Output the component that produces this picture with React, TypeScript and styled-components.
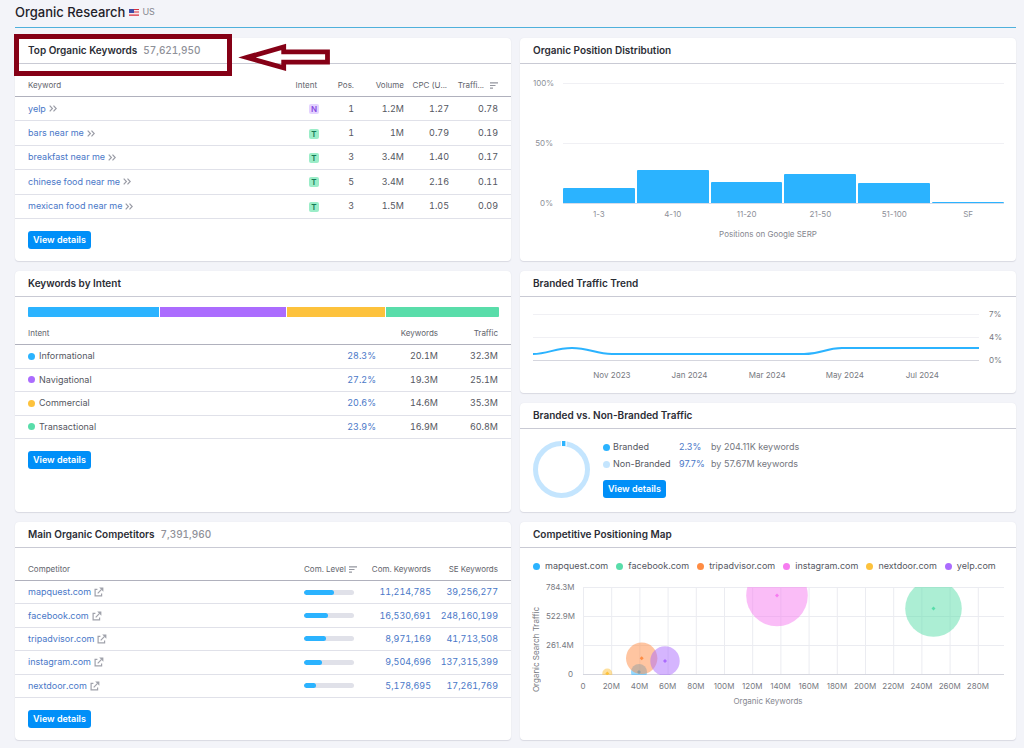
import React from 'react';
import styled, { createGlobalStyle } from 'styled-components';

const GlobalStyle = createGlobalStyle`
  *, *::before, *::after { box-sizing: border-box; }
  body {
    margin: 0;
    background: #f3f4f9;
    color: #55575f;
    font-family: Inter, "Liberation Sans", sans-serif;
    font-size: 9px;
    line-height: 12px;
  }
`;

const Page = styled.main`
  padding: 0 8px 8px 15px;
`;

const PageHeader = styled.header`
  display: flex;
  align-items: center;
  gap: 4px;
  height: 28px;
  padding-bottom: 3px;
  margin-bottom: 10px;
  border-bottom: 1px solid #4fb0dc;
`;

const PageTitle = styled.h1`
  margin: 0;
  font-size: 13px;
  line-height: 16px;
  font-weight: 500;
  color: #1f2128;
`;

const Country = styled.span`
  display: flex;
  align-items: center;
  gap: 3px;
  color: #85878f;
`;

const Dashboard = styled.div`
  display: grid;
  grid-template-columns: 1fr 1fr;
  gap: 10px 9px;
`;

const Stack = styled.div`
  display: flex;
  flex-direction: column;
  gap: 10px;
`;

const CardBox = styled.section`
  position: relative;
  min-width: 0;
  background: #fff;
  border-radius: 4px;
  box-shadow: 0 1px 1px #d9dae2, 0 0 1px #dfe0e8;
`;

const CardHeader = styled.header`
  display: flex;
  align-items: center;
  gap: 6px;
  height: 26px;
  padding: 0 13px 1px;
  border-bottom: 1px solid #c9cad4;
`;

const CardTitle = styled.h2`
  margin: 0;
  font-size: 10px;
  line-height: 14px;
  font-weight: 600;
  color: #2b2d35;
`;

const Count = styled.span`
  font-size: 10px;
  line-height: 14px;
  font-weight: 500;
  font-variant-numeric: tabular-nums;
  color: #8f9199;
`;

const Table = styled.table<{ $height: number }>`
  width: 100%;
  height: ${(p) => p.$height}px;
  table-layout: fixed;
  border-collapse: separate;
  border-spacing: 0;
  font-variant-numeric: tabular-nums;
`;

const Th = styled.th<{ $width?: number; $align?: string; $inset?: number; $height: number; $top?: number }>`
  width: ${(p) => (p.$width ? `${p.$width}px` : 'auto')};
  height: ${(p) => p.$height}px;
  padding: ${(p) => p.$top ?? 0}px ${(p) => p.$inset ?? 0}px 0 0;
  border-bottom: 1px solid #b0b1bd;
  font-size: 8px;
  font-weight: 400;
  text-align: ${(p) => p.$align ?? 'right'};
  white-space: nowrap;
  color: #62646c;
  &:first-child { padding-left: 13px; }
  &:last-child { padding-right: 13px; }
`;

const Td = styled.td<{ $align?: string }>`
  height: 23px;
  padding: 0;
  border-bottom: 1px solid #e0e1e9;
  text-align: ${(p) => p.$align ?? 'right'};
  white-space: nowrap;
  &:first-child { padding-left: 13px; }
  &:last-child { padding-right: 13px; }
`;

const HeadLabel = styled.span<{ $gap: number }>`
  display: inline-flex;
  align-items: center;
  gap: ${(p) => p.$gap}px;
`;

const Link = styled.a`
  display: inline-flex;
  align-items: center;
  gap: 3px;
  color: #4a78c8;
  text-decoration: none;
`;

const Badge = styled.span<{ $kind: string }>`
  display: inline-block;
  width: 10px;
  height: 10px;
  border-radius: 2px;
  font-size: 8px;
  line-height: 10px;
  font-weight: 600;
  text-align: center;
  vertical-align: middle;
  background: ${(p) => (p.$kind === 'N' ? '#e4d3ff' : '#9bedc8')};
  color: ${(p) => (p.$kind === 'N' ? '#8649e1' : '#157a56')};
`;

const CardFooter = styled.footer`
  padding: 12px 13px;
`;

const Button = styled.button`
  display: block;
  height: 18px;
  padding: 0 5px;
  border: 0;
  border-radius: 3px;
  background: #008ff8;
  color: #fff;
  font: 600 9px/18px Inter, "Liberation Sans", sans-serif;
  white-space: nowrap;
  cursor: pointer;
`;

const IntentBar = styled.div`
  display: flex;
  gap: 1px;
  height: 10px;
  margin: 10px 12px 0 13px;
  border-radius: 1px;
  overflow: hidden;
`;

const Segment = styled.div<{ $color: string; $share: number }>`
  flex: ${(p) => p.$share} 1 0;
  background: ${(p) => p.$color};
`;

const Dot = styled.span<{ $color: string }>`
  flex: none;
  width: 7px;
  height: 7px;
  border-radius: 50%;
  background: ${(p) => p.$color};
`;

const DotLabel = styled.span<{ $gap: number }>`
  display: inline-flex;
  align-items: center;
  gap: ${(p) => p.$gap}px;
  white-space: nowrap;
`;

const Level = styled.div`
  width: 50px;
  height: 5px;
  border-radius: 3px;
  background: #e0e1e9;
  overflow: hidden;
`;

const LevelFill = styled.div`
  height: 100%;
  border-radius: 3px;
  background: #2bb3ff;
`;

/* Position distribution */

const BarChart = styled.div`
  display: grid;
  grid-template-columns: 20px 1fr;
  column-gap: 10px;
  padding: 13px 12px 0 13px;
  font-size: 8px;
  color: #8d8f98;
`;

const ValueAxis = styled.div`
  display: flex;
  flex-direction: column;
  justify-content: space-between;
  height: 132px;
  text-align: right;
`;

const Bars = styled.div`
  display: flex;
  align-items: flex-end;
  gap: 2px;
  height: 121px;
  margin-top: 6px;
  border-top: 1px solid #f0f0f4;
  border-bottom: 1px solid #d5dcea;
  background: linear-gradient(#f0f0f4, #f0f0f4) 0 59px / 100% 1px no-repeat;
`;

const Bar = styled.div`
  flex: 1;
  border-radius: 1px 1px 0 0;
  background: #2bb3ff;
`;

const BarLabels = styled.div`
  grid-column: 2;
  display: flex;
  gap: 2px;
  margin-top: -1px;
  & > span { flex: 1; text-align: center; }
`;

const AxisTitle = styled.div<{ $top: number }>`
  margin-top: ${(p) => p.$top}px;
  font-size: 8px;
  text-align: center;
  color: #85878f;
`;

/* Traffic trend */

const Trend = styled.div`
  display: grid;
  grid-template-columns: 1fr 15px;
  column-gap: 10px;
  align-content: start;
  height: 96px;
  padding: 11px 12px 0 13px;
  font-size: 8px;
  color: #777981;
`;

const TrendPlot = styled.svg`
  display: block;
  width: 100%;
  height: 48px;
  margin-top: 5px;
`;

const TrendAxis = styled.div`
  display: flex;
  flex-direction: column;
  justify-content: space-between;
  height: 58px;
`;

const TrendLabels = styled.div`
  display: flex;
  padding: 3px 4% 0 9%;
  & > span { flex: 1; text-align: center; white-space: nowrap; }
`;

/* Branded share */

const Share = styled.div`
  display: flex;
  gap: 13px;
  height: 83px;
  padding: 12px 13px 0;
`;

const ShareDetails = styled.div`
  display: flex;
  flex-direction: column;
  align-items: flex-start;
`;

const ShareRow = styled.div`
  display: grid;
  grid-template-columns: 76px 32px auto;
  align-items: start;
  height: 17px;
  white-space: nowrap;
  color: #74767e;
`;

const ShareName = styled(DotLabel)`
  color: #55575f;
`;

const ShareButton = styled(Button)`
  margin-top: 5px;
`;

/* Positioning map */

const Legend = styled.div`
  display: flex;
  gap: 8px;
  padding: 12px 12px 0 13px;
`;

const MapChart = styled.div`
  display: grid;
  grid-template-columns: 6px 27px 1fr;
  column-gap: 7px;
  padding: 9px 12px 0 13px;
  font-size: 8px;
  color: #777981;
`;

const VerticalTitle = styled.div`
  writing-mode: vertical-rl;
  transform: rotate(180deg);
  justify-self: center;
  align-self: end;
  line-height: 8px;
  white-space: nowrap;
`;

const MapAxis = styled.div`
  display: flex;
  flex-direction: column;
  justify-content: space-between;
  height: 99px;
  text-align: right;
`;

const MapArea = styled.div`
  padding: 6px 0 0 3px;
`;

const MapPlot = styled.svg`
  display: block;
  width: 100%;
  height: auto;
  margin-bottom: 5px;
`;

const MapLabels = styled.div`
  display: grid;
  grid-template-columns: repeat(15, 1fr);
  margin: 0 12px 0 -14px;
  text-align: center;
  white-space: nowrap;
`;

/* Callout drawn over the first card */

const CalloutFrame = styled.div`
  position: absolute;
  top: -4px;
  left: -1px;
  width: 218px;
  height: 42px;
  border: 5px solid #850016;
  pointer-events: none;
`;

const CalloutArrow = styled.svg`
  position: absolute;
  top: 4px;
  left: 221px;
  pointer-events: none;
`;

const FlagIcon = () => (
  <svg width="10" height="7" viewBox="0 0 10 7" aria-hidden="true">
    <rect width="10" height="7" rx="1" fill="#f6e9ec" />
    <path d="M0 .5h10M0 3h10M0 6.2h10" stroke="#d8313f" strokeWidth="1.2" />
    <rect width="5" height="4" rx="0.5" fill="#3b4ba6" />
  </svg>
);

const SortIcon = () => (
  <svg width="8" height="7" viewBox="0 0 8 7" aria-hidden="true">
    <path d="M0 .8h8M0 3.5h5.5M0 6.2h3" stroke="#94969f" strokeWidth="1.2" />
  </svg>
);

const ChevronsIcon = () => (
  <svg width="8" height="7" viewBox="0 0 8 7" fill="none" stroke="#9a9ca6" strokeWidth="1.2" aria-hidden="true">
    <path d="M.7.7 3.4 3.5.7 6.3M4.5.7l2.7 2.8-2.7 2.8" />
  </svg>
);

const ExternalIcon = () => (
  <svg width="10" height="10" viewBox="0 0 10 10" fill="none" stroke="#a0a2ab" strokeWidth="1.2" aria-hidden="true">
    <path d="M3.4 2.4H1.1v6.5h6.5V6.4M3.7 6.3 7.6 2.4" />
    <path d="M5.2.6h4.2v4.2z" fill="#a0a2ab" stroke="none" />
  </svg>
);

const keywords = [
  ['yelp', 'N', '1', '1.2M', '1.27', '0.78'],
  ['bars near me', 'T', '1', '1M', '0.79', '0.19'],
  ['breakfast near me', 'T', '3', '3.4M', '1.40', '0.17'],
  ['chinese food near me', 'T', '5', '3.4M', '2.16', '0.11'],
  ['mexican food near me', 'T', '3', '1.5M', '1.05', '0.09'],
];

const intents = [
  { name: 'Informational', color: '#2bb3ff', share: 131, pct: '28.3%', kw: '20.1M', traffic: '32.3M' },
  { name: 'Navigational', color: '#ab6cfe', share: 127, pct: '27.2%', kw: '19.3M', traffic: '25.1M' },
  { name: 'Commercial', color: '#fdc23c', share: 98, pct: '20.6%', kw: '14.6M', traffic: '35.3M' },
  { name: 'Transactional', color: '#59ddaa', share: 113, pct: '23.9%', kw: '16.9M', traffic: '60.8M' },
];

const competitors = [
  { name: 'mapquest.com', level: 60, kw: '11,214,785', se: '39,256,277' },
  { name: 'facebook.com', level: 48, kw: '16,530,691', se: '248,160,199' },
  { name: 'tripadvisor.com', level: 44, kw: '8,971,169', se: '41,713,508' },
  { name: 'instagram.com', level: 36, kw: '9,504,696', se: '137,315,399' },
  { name: 'nextdoor.com', level: 24, kw: '5,178,695', se: '17,261,769' },
];

const positions = [
  { range: '1-3', value: 12.5 },
  { range: '4-10', value: 27.5 },
  { range: '11-20', value: 17.5 },
  { range: '21-50', value: 24 },
  { range: '51-100', value: 17 },
  { range: 'SF', value: 1 },
];

const bubbles = [
  { name: 'mapquest.com', color: '#2bb3ff', x: 56, y: 85, r: 8 },
  { name: 'facebook.com', color: '#59ddaa', x: 350.5, y: 21.5, r: 28.3 },
  { name: 'tripadvisor.com', color: '#ff8c43', x: 58.7, y: 71.3, r: 15.7 },
  { name: 'instagram.com', color: '#f67cf0', x: 194, y: 8.5, r: 30.8 },
  { name: 'nextdoor.com', color: '#fdc23c', x: 24.3, y: 86.5, r: 5 },
  { name: 'yelp.com', color: '#ab6cfe', x: 82, y: 74, r: 14.7 },
];

const mapTicks = Array.from({ length: 15 }, (_, i) => (i === 0 ? '0' : `${i * 20}M`));

function TopKeywords() {
  return (
    <CardBox>
      <CardHeader>
        <CardTitle>Top Organic Keywords</CardTitle>
        <Count>57,621,950</Count>
      </CardHeader>
      <Table $height={155}>
        <thead>
          <tr>
            <Th $height={33} $top={10} $align="left">Keyword</Th>
            <Th $height={33} $top={10} $width={40} $inset={2}>Intent</Th>
            <Th $height={33} $top={10} $width={35}>Pos.</Th>
            <Th $height={33} $top={10} $width={50}>Volume</Th>
            <Th $height={33} $top={10} $width={45} $inset={2}>CPC (U...</Th>
            <Th $height={33} $top={10} $width={62}>
              <HeadLabel $gap={6}>Traffi...<SortIcon /></HeadLabel>
            </Th>
          </tr>
        </thead>
        <tbody>
          {keywords.map(([name, kind, pos, volume, cpc, traffic]) => (
            <tr key={name}>
              <Td $align="left"><Link href="#">{name}<ChevronsIcon /></Link></Td>
              <Td><Badge $kind={kind}>{kind}</Badge></Td>
              <Td>{pos}</Td>
              <Td>{volume}</Td>
              <Td>{cpc}</Td>
              <Td>{traffic}</Td>
            </tr>
          ))}
        </tbody>
      </Table>
      <CardFooter><Button type="button">View details</Button></CardFooter>
      <CalloutFrame />
      <CalloutArrow width="98" height="32" viewBox="236 42 98 32" aria-hidden="true">
        <path
          d="M247 57.4 283.7 47v4.8h43.8v10.4h-43.8v5.6z"
          fill="none" stroke="#850016" strokeWidth="4.8"
        />
      </CalloutArrow>
    </CardBox>
  );
}

function IntentCard() {
  return (
    <CardBox>
      <CardHeader><CardTitle>Keywords by Intent</CardTitle></CardHeader>
      <IntentBar>
        {intents.map((i) => <Segment key={i.name} $color={i.color} $share={i.share} />)}
      </IntentBar>
      <Table $height={122}>
        <thead>
          <tr>
            <Th $height={28} $top={5} $align="left">Intent</Th>
            <Th $height={28} $width={50} />
            <Th $height={28} $top={5} $width={62}>Keywords</Th>
            <Th $height={28} $top={5} $width={73}>Traffic</Th>
          </tr>
        </thead>
        <tbody>
          {intents.map((i) => (
            <tr key={i.name}>
              <Td $align="left"><DotLabel $gap={4}><Dot $color={i.color} />{i.name}</DotLabel></Td>
              <Td><Link href="#">{i.pct}</Link></Td>
              <Td>{i.kw}</Td>
              <Td>{i.traffic}</Td>
            </tr>
          ))}
        </tbody>
      </Table>
      <CardFooter><Button type="button">View details</Button></CardFooter>
    </CardBox>
  );
}

function CompetitorsCard() {
  return (
    <CardBox>
      <CardHeader>
        <CardTitle>Main Organic Competitors</CardTitle>
        <Count>7,391,960</Count>
      </CardHeader>
      <Table $height={150}>
        <thead>
          <tr>
            <Th $height={33} $top={10} $align="left">Competitor</Th>
            <Th $height={33} $top={10} $width={60} $align="left">
              <HeadLabel $gap={3}>Com. Level<SortIcon /></HeadLabel>
            </Th>
            <Th $height={33} $top={10} $width={67}>Com. Keywords</Th>
            <Th $height={33} $top={10} $width={80}>SE Keywords</Th>
          </tr>
        </thead>
        <tbody>
          {competitors.map((c) => (
            <tr key={c.name}>
              <Td $align="left"><Link href="#">{c.name}<ExternalIcon /></Link></Td>
              <Td $align="left"><Level><LevelFill style={{ width: `${c.level}%` }} /></Level></Td>
              <Td><Link href="#">{c.kw}</Link></Td>
              <Td><Link href="#">{c.se}</Link></Td>
            </tr>
          ))}
        </tbody>
      </Table>
      <CardFooter><Button type="button">View details</Button></CardFooter>
    </CardBox>
  );
}

function PositionCard() {
  return (
    <CardBox>
      <CardHeader><CardTitle>Organic Position Distribution</CardTitle></CardHeader>
      <BarChart>
        <ValueAxis><span>100%</span><span>50%</span><span>0%</span></ValueAxis>
        <Bars>
          {positions.map((p) => <Bar key={p.range} style={{ height: `${p.value}%` }} />)}
        </Bars>
        <BarLabels>{positions.map((p) => <span key={p.range}>{p.range}</span>)}</BarLabels>
      </BarChart>
      <AxisTitle $top={8}>Positions on Google SERP</AxisTitle>
    </CardBox>
  );
}

function TrendCard() {
  return (
    <CardBox>
      <CardHeader><CardTitle>Branded Traffic Trend</CardTitle></CardHeader>
      <Trend>
        <TrendPlot viewBox="0 0 446 48" preserveAspectRatio="none" aria-hidden="true">
          <path d="M0 1.5h446M0 24.5h446" stroke="#f0f0f4" />
          <path d="M0 47.5h446" stroke="#d5d6de" />
          <path
            d="M0 41c15 0 22-6 39-6s24 6 40 6h192c18 0 21-6 38-6h137"
            fill="none" stroke="#2bb3ff" strokeWidth="2"
          />
        </TrendPlot>
        <TrendAxis><span>7%</span><span>4%</span><span>0%</span></TrendAxis>
        <TrendLabels>
          {['Nov 2023', 'Jan 2024', 'Mar 2024', 'May 2024', 'Jul 2024'].map((m) => <span key={m}>{m}</span>)}
        </TrendLabels>
      </Trend>
    </CardBox>
  );
}

function BrandedCard() {
  return (
    <CardBox>
      <CardHeader><CardTitle>Branded vs. Non-Branded Traffic</CardTitle></CardHeader>
      <Share>
        <svg width="57" height="57" viewBox="0 0 57 57" fill="none" strokeWidth="5" aria-hidden="true">
          <circle cx="28.5" cy="28.5" r="26" stroke="#c4e5fe" />
          <path d="M28 2.5h5.6" stroke="#fff" strokeWidth="5.4" />
          <path d="M29 2.5h3.4" stroke="#2bb3ff" />
        </svg>
        <ShareDetails>
          <ShareRow>
            <ShareName $gap={3}><Dot $color="#2bb3ff" />Branded</ShareName>
            <Link href="#">2.3%</Link>
            <span>by 204.11K keywords</span>
          </ShareRow>
          <ShareRow>
            <ShareName $gap={3}><Dot $color="#c4e5fe" />Non-Branded</ShareName>
            <Link href="#">97.7%</Link>
            <span>by 57.67M keywords</span>
          </ShareRow>
          <ShareButton type="button">View details</ShareButton>
        </ShareDetails>
      </Share>
    </CardBox>
  );
}

function MapCard() {
  return (
    <CardBox>
      <CardHeader><CardTitle>Competitive Positioning Map</CardTitle></CardHeader>
      <Legend>
        {bubbles.map((b) => (
          <DotLabel key={b.name} $gap={5}><Dot $color={b.color} />{b.name}</DotLabel>
        ))}
      </Legend>
      <MapChart>
        <VerticalTitle>Organic Search Traffic</VerticalTitle>
        <MapAxis><span>784.3M</span><span>522.9M</span><span>261.4M</span><span>0</span></MapAxis>
        <MapArea>
          <MapPlot viewBox="0 0 421 88" aria-hidden="true">
            {mapTicks.map((t, i) => (
              <path key={t} d={`M${0.5 + i * 28.2} 0v88`} stroke="#ebecf1" />
            ))}
            <path d="M0 .5h421M0 29.5h421M0 58.5h421" stroke="#ebecf1" />
            <path d="M0 87.5h421" stroke="#d5d6de" />
            {bubbles.map((b) => (
              <g key={b.name} fill={b.color}>
                <circle cx={b.x} cy={b.y} r={b.r} opacity="0.5" />
                <path d={`M${b.x} ${b.y - 2}l2 2-2 2-2-2z`} />
              </g>
            ))}
          </MapPlot>
          <MapLabels>{mapTicks.map((t) => <span key={t}>{t}</span>)}</MapLabels>
        </MapArea>
      </MapChart>
      <AxisTitle $top={3}>Organic Keywords</AxisTitle>
    </CardBox>
  );
}

export default function App() {
  return (
    <Page>
      <GlobalStyle />
      <PageHeader>
        <PageTitle>Organic Research</PageTitle>
        <Country><FlagIcon />US</Country>
      </PageHeader>
      <Dashboard>
        <TopKeywords />
        <PositionCard />
        <IntentCard />
        <Stack>
          <TrendCard />
          <BrandedCard />
        </Stack>
        <CompetitorsCard />
        <MapCard />
      </Dashboard>
    </Page>
  );
}
